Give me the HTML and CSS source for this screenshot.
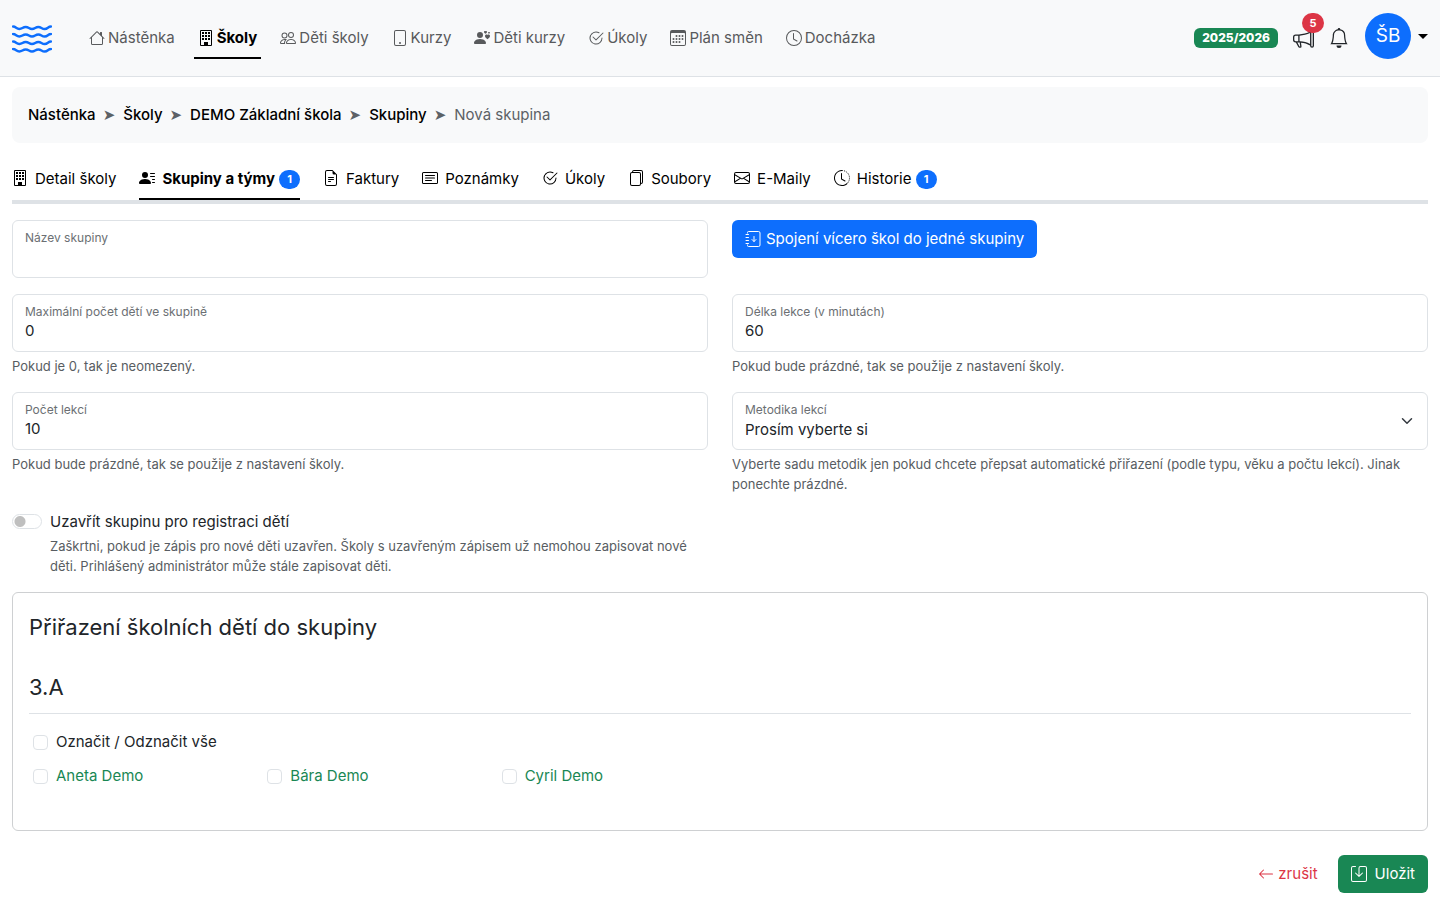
FILE: index.html
```html
<!DOCTYPE html>
<html lang="cs">
<head>
  <meta charset="UTF-8">
  <meta name="viewport" content="width=device-width, initial-scale=1">
  <title>Nová skupina</title>
  <link rel="stylesheet" href="styles.css">
</head>
<body>
  <!-- icons shared by the menu and the tabs -->
  <svg class="sprite" aria-hidden="true">
    <symbol id="building" viewBox="0 0 16 16">
      <path d="M2 1a1 1 0 0 1 1-1h10a1 1 0 0 1 1 1v14a1 1 0 0 1-1 1H3a1 1 0 0 1-1-1zm11 0H3v14h3v-2.5a.5.5 0 0 1 .5-.5h3a.5.5 0 0 1 .5.5V15h3z"/>
      <path d="M4 2h2v2H4zM7 2h2v2H7zM10 2h2v2h-2zM4 5h2v2H4zM7 5h2v2H7zM10 5h2v2h-2zM4 8h2v2H4zM7 8h2v2H7zM10 8h2v2h-2zM6 12h4v4H6z"/>
    </symbol>
    <symbol id="check" viewBox="0 0 16 16">
      <path d="M2.5 8a5.5 5.5 0 0 1 8.25-4.764.5.5 0 0 0 .5-.866A6.5 6.5 0 1 0 14.5 8a.5.5 0 0 0-1 0 5.5 5.5 0 1 1-11 0"/>
      <path d="M15.354 3.354a.5.5 0 0 0-.708-.708L8 9.293 5.354 6.646a.5.5 0 1 0-.708.708l3 3a.5.5 0 0 0 .708 0z"/>
    </symbol>
    <symbol id="wave" viewBox="0 0 40 6">
      <path d="M1 1.5c3 0 3.3 2.5 6.3 2.5s3.3-2 6.4-2 3.3 2 6.3 2 3.3-2 6.3-2 3.3 2 6.4 2 3.3-2.5 6.3-2.5" fill="none" stroke="currentColor" stroke-width="2.4" stroke-linecap="round"/>
    </symbol>
  </svg>

  <header class="navbar">
    <a class="logo" href="#" aria-label="Domů">
      <svg width="40" height="30" viewBox="0 0 40 30">
        <use href="#wave" y="2" width="40" height="6"/>
        <use href="#wave" y="9.5" width="40" height="6"/>
        <use href="#wave" y="17" width="40" height="6"/>
        <use href="#wave" y="24.5" width="40" height="6"/>
      </svg>
    </a>
    <nav class="menu">
      <a href="#"><svg class="icon" viewBox="0 0 16 16"><path d="M8.707 1.5a1 1 0 0 0-1.414 0L.646 8.146a.5.5 0 0 0 .708.708L2 8.207V13.5A1.5 1.5 0 0 0 3.5 15h9a1.5 1.5 0 0 0 1.5-1.5V8.207l.646.647a.5.5 0 0 0 .708-.708L13 5.793V2.5a.5.5 0 0 0-.5-.5h-1a.5.5 0 0 0-.5.5v1.293zM13 7.207V13.5a.5.5 0 0 1-.5.5h-9a.5.5 0 0 1-.5-.5V7.207l5-5z"/></svg>Nástěnka</a>
      <a href="#" class="active"><svg class="icon"><use href="#building"/></svg>Školy</a>
      <a href="#"><svg class="icon" viewBox="0 0 16 16"><path d="M15 14s1 0 1-1-1-4-5-4-5 3-5 4 1 1 1 1zm-7.978-1L7 12.996c.001-.264.167-1.03.76-1.72C8.312 10.629 9.282 10 11 10c1.717 0 2.687.63 3.24 1.276.593.69.758 1.457.76 1.72l-.008.002-.014.002zM11 7a2 2 0 1 0 0-4 2 2 0 0 0 0 4m3-2a3 3 0 1 1-6 0 3 3 0 0 1 6 0M6.936 9.28a6 6 0 0 0-1.23-.247A7 7 0 0 0 5 9c-4 0-5 3-5 4q0 1 1 1h4.216A2.24 2.24 0 0 1 5 13c0-1.01.377-2.042 1.09-2.904.243-.294.526-.569.846-.816M4.92 10A5.5 5.5 0 0 0 4 13H1c0-.26.164-1.03.76-1.724.545-.636 1.492-1.256 3.16-1.275ZM1.5 5.5a3 3 0 1 1 6 0 3 3 0 0 1-6 0m3-2a2 2 0 1 0 0 4 2 2 0 0 0 0-4"/></svg>Děti školy</a>
      <a href="#"><svg class="icon" viewBox="0 0 16 16"><path d="M12 1a1 1 0 0 1 1 1v12a1 1 0 0 1-1 1H4a1 1 0 0 1-1-1V2a1 1 0 0 1 1-1zM4 0a2 2 0 0 0-2 2v12a2 2 0 0 0 2 2h8a2 2 0 0 0 2-2V2a2 2 0 0 0-2-2z"/><path d="M8 14a1 1 0 1 0 0-2 1 1 0 0 0 0 2"/></svg>Kurzy</a>
      <a href="#"><svg class="icon" viewBox="0 0 16 16"><path d="M11.5 1.246c.832-.855 2.913.642 0 2.566-2.913-1.924-.832-3.421 0-2.566M9 5a3 3 0 1 1-6 0 3 3 0 0 1 6 0m-9 8c0 1 1 1 1 1h10s1 0 1-1-1-4-6-4-6 3-6 4m13.5-8.09c1.387-1.425 4.855 1.07 0 4.277-4.854-3.207-1.387-5.702 0-4.276ZM15 2.165c.555-.57 1.942.428 0 1.711-1.942-1.283-.555-2.281 0-1.71Z"/></svg>Děti kurzy</a>
      <a href="#"><svg class="icon"><use href="#check"/></svg>Úkoly</a>
      <a href="#"><svg class="icon" viewBox="0 0 16 16"><path d="M14 0H2a2 2 0 0 0-2 2v12a2 2 0 0 0 2 2h12a2 2 0 0 0 2-2V2a2 2 0 0 0-2-2M1 3.857C1 3.384 1.448 3 2 3h12c.552 0 1 .384 1 .857v10.286c0 .473-.448.857-1 .857H2c-.552 0-1-.384-1-.857z"/><path d="M6.5 7a1 1 0 1 0 0-2 1 1 0 0 0 0 2m3 0a1 1 0 1 0 0-2 1 1 0 0 0 0 2m3 0a1 1 0 1 0 0-2 1 1 0 0 0 0 2m-9 3a1 1 0 1 0 0-2 1 1 0 0 0 0 2m3 0a1 1 0 1 0 0-2 1 1 0 0 0 0 2m3 0a1 1 0 1 0 0-2 1 1 0 0 0 0 2m3 0a1 1 0 1 0 0-2 1 1 0 0 0 0 2m-9 3a1 1 0 1 0 0-2 1 1 0 0 0 0 2m3 0a1 1 0 1 0 0-2 1 1 0 0 0 0 2m3 0a1 1 0 1 0 0-2 1 1 0 0 0 0 2"/></svg>Plán směn</a>
      <a href="#"><svg class="icon" viewBox="0 0 16 16"><path d="M8 3.5a.5.5 0 0 0-1 0V9a.5.5 0 0 0 .252.434l3.5 2a.5.5 0 0 0 .496-.868L8 8.71z"/><path d="M8 16A8 8 0 1 0 8 0a8 8 0 0 0 0 16m7-8A7 7 0 1 1 1 8a7 7 0 0 1 14 0"/></svg>Docházka</a>
    </nav>
    <div class="user">
      <span class="year">2025/2026</span>
      <a href="#" class="news" aria-label="Novinky">
        <svg width="21" height="21" viewBox="0 0 16 16"><path d="M13 2.5a1.5 1.5 0 0 1 3 0v11a1.5 1.5 0 0 1-3 0v-.214c-2.162-1.241-4.49-1.843-6.912-2.083l.405 2.712A1 1 0 0 1 5.51 15.1h-.548a1 1 0 0 1-.916-.599l-1.85-3.49-.202-.003A2.014 2.014 0 0 1 0 9V7a2.02 2.02 0 0 1 1.992-2.013 75 75 0 0 0 2.483-.075c3.043-.154 6.148-.849 8.525-2.199zm1 0v11a.5.5 0 0 0 1 0v-11a.5.5 0 0 0-1 0m-1 1.35c-2.344 1.205-5.209 1.842-8 2.033v4.233q.27.015.537.036c2.568.189 5.093.744 7.463 1.993zm-9 6.215v-4.13a95 95 0 0 1-1.992.052A1.02 1.02 0 0 0 1 7v2c0 .55.448 1.002 1.006 1.009A61 61 0 0 1 4 10.065m-.657.975 1.609 3.037.01.024h.548l-.002-.014-.443-2.966a68 68 0 0 0-1.722-.082z"/></svg>
        <span class="count">5</span>
      </a>
      <a href="#" class="bell" aria-label="Upozornění">
        <svg width="20" height="20" viewBox="0 0 16 16"><path d="M8 16a2 2 0 0 0 2-2H6a2 2 0 0 0 2 2M8 1.918l-.797.161A4 4 0 0 0 4 6c0 .628-.134 2.197-.459 3.742-.16.767-.376 1.566-.663 2.258h10.244c-.287-.692-.502-1.49-.663-2.258C12.134 8.197 12 6.628 12 6a4 4 0 0 0-3.203-3.92zM14.22 12c.223.447.481.801.78 1H1c.299-.199.557-.553.78-1C2.68 10.2 3 6.88 3 6c0-2.42 1.72-4.44 4.005-4.901a1 1 0 1 1 1.99 0A5 5 0 0 1 13 6c0 .88.32 4.2 1.22 6"/></svg>
      </a>
      <button type="button" class="profile"><span class="avatar">ŠB</span><span class="caret"></span></button>
    </div>
  </header>

  <main>
    <nav class="breadcrumb">
      <a href="#">Nástěnka</a>
      <a href="#">Školy</a>
      <a href="#">DEMO Základní škola</a>
      <a href="#">Skupiny</a>
      <span>Nová skupina</span>
    </nav>

    <nav class="tabs">
      <a href="#"><svg class="icon"><use href="#building"/></svg>Detail školy</a>
      <a href="#" class="active"><svg class="icon" viewBox="0 0 16 16"><path d="M6 8a3 3 0 1 0 0-6 3 3 0 0 0 0 6m-5 6s-1 0-1-1 1-4 6-4 6 3 6 4-1 1-1 1zM11 3.5a.5.5 0 0 1 .5-.5h4a.5.5 0 0 1 0 1h-4a.5.5 0 0 1-.5-.5m.5 2.5a.5.5 0 0 0 0 1h4a.5.5 0 0 0 0-1zm2 3a.5.5 0 0 0 0 1h2a.5.5 0 0 0 0-1zm0 3a.5.5 0 0 0 0 1h2a.5.5 0 0 0 0-1z"/></svg>Skupiny a týmy<span class="pill">1</span></a>
      <a href="#"><svg class="icon" viewBox="0 0 16 16"><path d="M5.5 7a.5.5 0 0 0 0 1h5a.5.5 0 0 0 0-1zM5 9.5a.5.5 0 0 1 .5-.5h5a.5.5 0 0 1 0 1h-5a.5.5 0 0 1-.5-.5m0 2a.5.5 0 0 1 .5-.5h2a.5.5 0 0 1 0 1h-2a.5.5 0 0 1-.5-.5"/><path d="M9.5 0H4a2 2 0 0 0-2 2v12a2 2 0 0 0 2 2h8a2 2 0 0 0 2-2V4.5zm0 1v2A1.5 1.5 0 0 0 11 4.5h2V14a1 1 0 0 1-1 1H4a1 1 0 0 1-1-1V2a1 1 0 0 1 1-1z"/></svg>Faktury</a>
      <a href="#"><svg class="icon" viewBox="0 0 16 16"><path d="M14.5 3a.5.5 0 0 1 .5.5v9a.5.5 0 0 1-.5.5h-13a.5.5 0 0 1-.5-.5v-9a.5.5 0 0 1 .5-.5zm-13-1A1.5 1.5 0 0 0 0 3.5v9A1.5 1.5 0 0 0 1.5 14h13a1.5 1.5 0 0 0 1.5-1.5v-9A1.5 1.5 0 0 0 14.5 2z"/><path d="M3 5.5a.5.5 0 0 1 .5-.5h9a.5.5 0 0 1 0 1h-9a.5.5 0 0 1-.5-.5M3 8a.5.5 0 0 1 .5-.5h9a.5.5 0 0 1 0 1h-9A.5.5 0 0 1 3 8m0 2.5a.5.5 0 0 1 .5-.5h6a.5.5 0 0 1 0 1h-6a.5.5 0 0 1-.5-.5"/></svg>Poznámky</a>
      <a href="#"><svg class="icon"><use href="#check"/></svg>Úkoly</a>
      <a href="#"><svg class="icon" viewBox="0 0 16 16"><path d="M13 0H6a2 2 0 0 0-2 2 2 2 0 0 0-2 2v10a2 2 0 0 0 2 2h7a2 2 0 0 0 2-2 2 2 0 0 0 2-2V2a2 2 0 0 0-2-2m0 13V4a2 2 0 0 0-2-2H5a1 1 0 0 1 1-1h7a1 1 0 0 1 1 1v10a1 1 0 0 1-1 1M3 4a1 1 0 0 1 1-1h7a1 1 0 0 1 1 1v10a1 1 0 0 1-1 1H4a1 1 0 0 1-1-1z"/></svg>Soubory</a>
      <a href="#"><svg class="icon" viewBox="0 0 16 16"><path d="M0 4a2 2 0 0 1 2-2h12a2 2 0 0 1 2 2v8a2 2 0 0 1-2 2H2a2 2 0 0 1-2-2zm2-1a1 1 0 0 0-1 1v.217l7 4.2 7-4.2V4a1 1 0 0 0-1-1zm13 2.383-4.708 2.825L15 11.105zm-.034 6.876-5.64-3.471L8 9.583l-1.326-.795-5.64 3.47A1 1 0 0 0 2 13h12a1 1 0 0 0 .966-.741M1 11.105l4.708-2.897L1 5.383z"/></svg>E-Maily</a>
      <a href="#"><svg class="icon" viewBox="0 0 16 16"><path d="M8 1a7 7 0 1 0 4.95 11.95l.707.707A8.001 8.001 0 1 1 8 0z"/><path d="M7.5 3a.5.5 0 0 1 .5.5v5.21l3.248 1.856a.5.5 0 0 1-.496.868l-3.5-2A.5.5 0 0 1 7 9V3.5a.5.5 0 0 1 .5-.5"/><path d="M8 .5A7.5 7.5 0 0 1 13.3 13.3" fill="none" stroke="currentColor" stroke-dasharray="1 1"/></svg>Historie<span class="pill">1</span></a>
    </nav>

    <form>
      <div class="fields">
        <div class="field">
          <div class="floating">
            <label for="name">Název skupiny</label>
            <input type="text" id="name">
          </div>
        </div>
        <div class="field">
          <button type="button" class="btn btn-primary"><svg class="icon" viewBox="0 0 16 16"><g fill="none" stroke="currentColor" stroke-linecap="round" stroke-linejoin="round"><path d="M2.5 2v-.5a1 1 0 0 1 1-1h10A1.5 1.5 0 0 1 15 2v12a1.5 1.5 0 0 1-1.5 1.5h-10a1 1 0 0 1-1-1V14M1 3.5h2.5M1 6.5h2.5M1 9.5h2.5M1 12.5h2.5M9 5.5v5M7 8.500l2 2 2-2"/></g></svg>Spojení vícero škol do jedné skupiny</button>
        </div>
        <div class="field">
          <div class="floating">
            <label for="max">Maximální počet dětí ve skupině</label>
            <input type="text" inputmode="numeric" id="max" value="0">
          </div>
          <p class="help">Pokud je 0, tak je neomezený.</p>
        </div>
        <div class="field">
          <div class="floating">
            <label for="length">Délka lekce (v minutách)</label>
            <input type="text" inputmode="numeric" id="length" value="60">
          </div>
          <p class="help">Pokud bude prázdné, tak se použije z nastavení školy.</p>
        </div>
        <div class="field">
          <div class="floating">
            <label for="lessons">Počet lekcí</label>
            <input type="text" inputmode="numeric" id="lessons" value="10">
          </div>
          <p class="help">Pokud bude prázdné, tak se použije z nastavení školy.</p>
        </div>
        <div class="field">
          <div class="floating">
            <label for="method">Metodika lekcí</label>
            <select id="method">
              <option>Prosím vyberte si</option>
            </select>
            <svg class="chevron" width="12" height="12" viewBox="0 0 16 16"><path d="m2 5 6 6 6-6"/></svg>
          </div>
          <p class="help">Vyberte sadu metodik jen pokud chcete přepsat automatické přiřazení (podle typu, věku a počtu lekcí). Jinak ponechte prázdné.</p>
        </div>
        <div class="field switch">
          <input type="checkbox" id="closed">
          <div>
            <label for="closed">Uzavřít skupinu pro registraci dětí</label>
            <p class="help">Zaškrtni, pokud je zápis pro nové děti uzavřen. Školy s uzavřeným zápisem už nemohou zapisovat nové děti. Prihlášený administrátor může stále zapisovat děti.</p>
          </div>
        </div>
      </div>

      <section class="card">
        <h2>Přiřazení školních dětí do skupiny</h2>
        <h3>3.A</h3>
        <label class="check"><input type="checkbox">Označit / Odznačit vše</label>
        <div class="children">
          <label class="check"><input type="checkbox">Aneta Demo</label>
          <label class="check"><input type="checkbox">Bára Demo</label>
          <label class="check"><input type="checkbox">Cyril Demo</label>
        </div>
      </section>

      <div class="actions">
        <a href="#" class="cancel"><svg class="icon" viewBox="0 0 16 16"><path d="M15 8a.5.5 0 0 0-.5-.5H2.707l3.147-3.146a.5.5 0 1 0-.708-.708l-4 4a.5.5 0 0 0 0 .708l4 4a.5.5 0 0 0 .708-.708L2.707 8.5H14.5A.5.5 0 0 0 15 8"/></svg>zrušit</a>
        <button type="submit" class="btn btn-success"><svg class="icon" viewBox="0 0 16 16"><path d="M2 1a1 1 0 0 0-1 1v12a1 1 0 0 0 1 1h12a1 1 0 0 0 1-1V2a1 1 0 0 0-1-1H9.5a1 1 0 0 0-1 1v7.293l2.646-2.647a.5.5 0 0 1 .708.708l-3.5 3.5a.5.5 0 0 1-.708 0l-3.5-3.5a.5.5 0 1 1 .708-.708L7.5 9.293V2a2 2 0 0 1 2-2H14a2 2 0 0 1 2 2v12a2 2 0 0 1-2 2H2a2 2 0 0 1-2-2V2a2 2 0 0 1 2-2h2.5a.5.5 0 0 1 0 1z"/></svg>Uložit</button>
      </div>
    </form>
  </main>
</body>
</html>
```
FILE: styles.css
```css
* {
  box-sizing: border-box;
}
body {
  margin: 0;
  font-family: Inter, "Liberation Sans", sans-serif;
  font-size: 15px;
  line-height: 24px;
  color: #212529;
  background: #fff;
}
a {
  color: inherit;
  text-decoration: none;
}
h2, h3, p {
  margin: 0;
}
button, input, select {
  font: inherit;
  color: inherit;
}
svg {
  fill: currentColor;
}
.sprite {
  display: none;
}
.icon {
  width: 16px;
  height: 16px;
  flex: none;
}

/* top bar */
.navbar {
  display: flex;
  align-items: center;
  height: 77px;
  padding: 0 12px;
  background: #f8f9fa;
  border-bottom: 1px solid #dee2e6;
}
.logo {
  display: flex;
  margin-right: 33px;
  color: #0d6efd;
}
.menu {
  display: flex;
  gap: 15px;
}
.menu a {
  display: flex;
  align-items: center;
  gap: 3px;
  padding: 9px 4px 7px;
  color: #585a5c;
  border-bottom: 2px solid transparent;
}
.menu a.active {
  color: #000;
  font-weight: 700;
  border-color: #000;
}
.user {
  display: flex;
  align-items: center;
  margin-left: auto;
}
.year {
  padding: 0 8px;
  line-height: 20px;
  font-size: 12px;
  font-weight: 800;
  color: #fff;
  background: #198754;
  border-radius: 6px;
}
.news, .bell {
  display: flex;
  position: relative;
  margin-left: 15px;
}
.count {
  position: absolute;
  top: -15px;
  left: 9px;
  width: 22px;
  line-height: 20px;
  border-radius: 10px;
  font-size: 11px;
  font-weight: 700;
  text-align: center;
  color: #fff;
  background: #dc3545;
}
.profile {
  display: flex;
  align-items: center;
  gap: 7px;
  margin: 0 0 4px 16px;
  padding: 0;
  border: 0;
  background: none;
}
.avatar {
  width: 46px;
  line-height: 46px;
  border-radius: 50%;
  font-size: 19px;
  text-align: center;
  color: #fff;
  background: #0d6efd;
}
.caret {
  border: 5px solid transparent;
  border-top-color: #000;
  border-bottom: 0;
}

main {
  padding: 10px 12px 16px;
}
.breadcrumb {
  display: flex;
  padding: 16px;
  line-height: 23px;
  border-radius: 8px;
  background: #f8f9fa;
  color: #000;
  font-weight: 500;
}
.breadcrumb > * + *::before {
  content: "➤";
  padding: 0 8px 0 7px;
  font-family: "DejaVu Sans", sans-serif;
  font-weight: 400;
  color: #5c6166;
}
.breadcrumb span {
  color: #5c6166;
  font-weight: 400;
}

.tabs {
  display: flex;
  gap: 23px;
  margin: 16px 0;
  border-bottom: 4px solid #dee2e6;
  color: #000;
}
.tabs a {
  display: flex;
  align-items: center;
  padding: 8px 0 7px;
  border-bottom: 2px solid transparent;
}
.tabs .icon {
  margin: 0 7px 2px 0;
}
.tabs a.active {
  font-weight: 700;
  border-color: #000;
}
.pill {
  width: 21px;
  margin-left: 4px;
  line-height: 19px;
  border-radius: 10px;
  font-size: 11px;
  font-weight: 700;
  text-align: center;
  color: #fff;
  background: #0d6efd;
}

/* form */
.fields {
  display: grid;
  grid-template-columns: 1fr 1fr;
  gap: 16px 24px;
}
.floating {
  position: relative;
}
.floating label {
  position: absolute;
  top: 8px;
  left: 13px;
  font-size: 12px;
  line-height: 20px;
  color: #6b6f73;
}
.floating input, .floating select {
  display: block;
  width: 100%;
  height: 58px;
  padding: 24px 12px 10px;
  line-height: 22px;
  border: 1px solid #dee2e6;
  border-radius: 6px;
  background: #fff;
  appearance: none;
}
.floating select {
  padding: 26px 12px 8px;
}
.chevron {
  position: absolute;
  top: 23px;
  right: 15px;
  fill: none;
  stroke: #343a40;
  stroke-width: 2;
  stroke-linecap: round;
  stroke-linejoin: round;
  pointer-events: none;
}
.help {
  margin-top: 4px;
  font-size: 13px;
  line-height: 20px;
  color: #585d62;
}
.switch {
  display: flex;
  gap: 8px;
}
.switch input {
  flex: none;
  width: 30px;
  height: 15px;
  margin: 4px 0 0;
  border: 1px solid #dee2e6;
  border-radius: 8px;
  background: radial-gradient(circle at 7px 50%, #bfbfbf 5px, #fff 6px);
  appearance: none;
}
.switch .help {
  margin-top: 2px;
}
.btn {
  display: inline-flex;
  align-items: center;
  height: 38px;
  padding: 0 13px;
  gap: 5px;
  border: 0;
  border-radius: 6px;
  color: #fff;
}
.btn-primary {
  background: #0d6efd;
}
.btn-success {
  gap: 8px;
  background: #198754;
}

.card {
  margin-top: 16px;
  padding: 16px 16px 42px;
  border: 1px solid #ced0d2;
  border-radius: 6px;
}
.card h2, .card h3 {
  font-size: 22px;
  font-weight: 400;
  line-height: 36px;
}
.card h3 {
  margin: 24px 0 16px;
  padding-bottom: 8px;
  border-bottom: 1px solid #dee2e6;
}
.check {
  display: flex;
  align-items: center;
  gap: 8px;
  padding-left: 4px;
}
.check input {
  width: 15px;
  height: 15px;
  margin: 0;
  border: 1px solid #dee2e6;
  border-radius: 4px;
  background: #fff;
  appearance: none;
}
.check input:checked, .switch input:checked {
  background: #0d6efd;
}
.children {
  display: grid;
  grid-template-columns: repeat(6, 1fr);
  gap: 24px;
  margin-top: 10px;
  color: #198754;
}
.actions {
  display: flex;
  justify-content: flex-end;
  align-items: center;
  gap: 20px;
  margin-top: 24px;
}
.cancel {
  display: flex;
  align-items: center;
  gap: 4px;
  color: #dc3545;
}
```
